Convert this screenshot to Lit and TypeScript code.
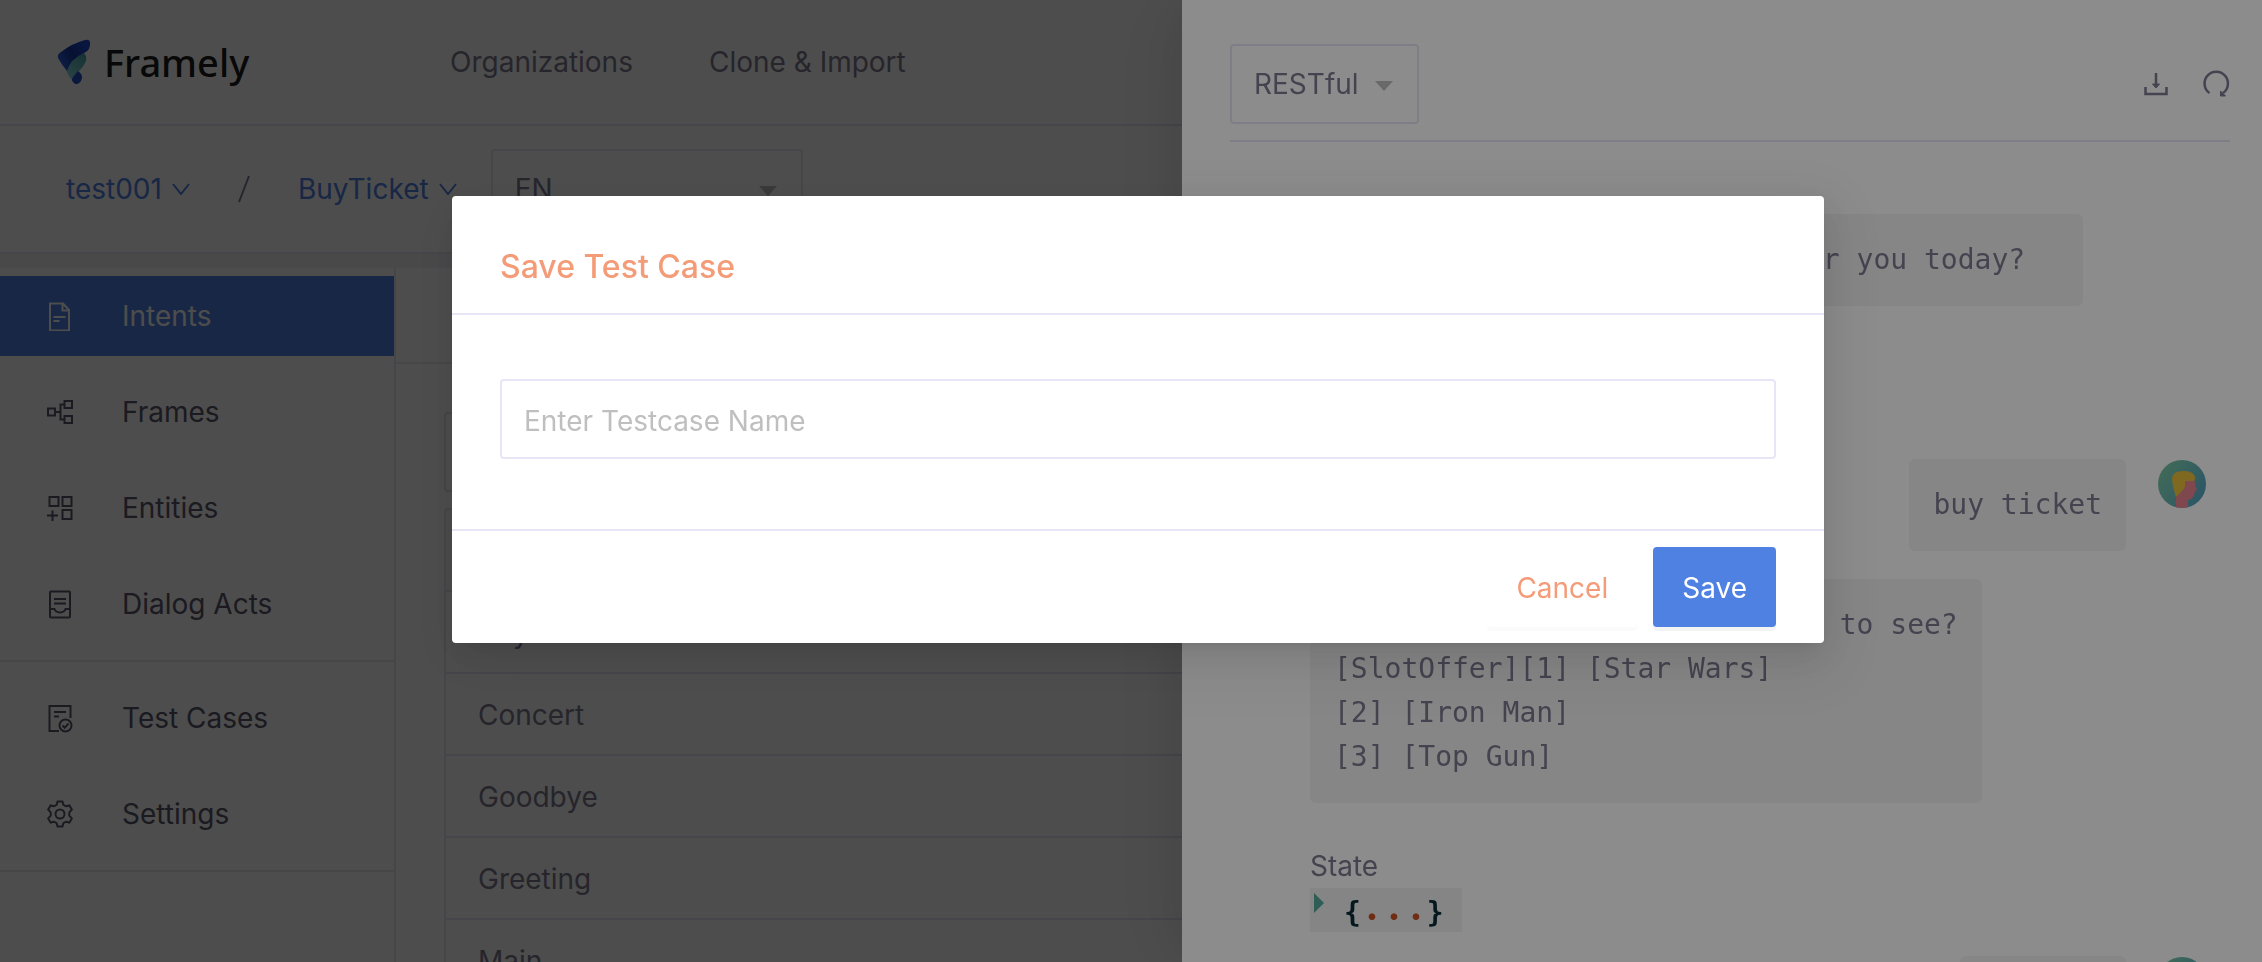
import { LitElement, html, css, svg } from "lit";
import { customElement } from "lit/decorators.js";
import { classMap } from "lit/directives/class-map.js";

const icons: Record<string, unknown> = {
  intents: svg`<path d="M4 2.5h13l6 6.500v20.500h-19zM16.500 2.500v7h6.500" /><path d="M7.500 16h12M7.500 20h6" />`,
  frames: svg`<rect x="2" y="11.500" width="7" height="7" /><rect x="18.500" y="4" width="7.500" height="7" /><rect x="18.500" y="19" width="7.500" height="7" /><path d="M9 15h5M18.500 7.500H14.500v15h4" />`,
  entities: svg`<rect x="3.500" y="4" width="9" height="9" /><rect x="16.500" y="4" width="9" height="9" /><rect x="16.500" y="17" width="9" height="9" /><path d="M1 22.500h11M6.500 17.500v10.500" />`,
  acts: svg`<rect x="4" y="2.500" width="20" height="26" rx="1" /><path d="M8 10h12M8 14.500h12M4 20h4.500c1.500 4.500 9.500 4.500 11 0h4.500" />`,
  tests: svg`<path d="M13 28H3.500V3h21v12" /><path d="M8 9h12M8 13.500h5" /><circle cx="19.500" cy="22.500" r="6" /><path d="M16.500 22.500l2.200 2.300 3.800-4.300" />`,
  settings: svg`<path d="M11.600 2.500h4.800l1 3.400 2.500 1.400 3.500-.8 2.400 4.100-2.500 2.700v3.400l2.500 2.700-2.400 4.100-3.500-.8-2.500 1.400-1 3.400h-4.800l-1-3.400-2.500-1.400-3.500.8-2.400-4.100 2.500-2.700v-3.400l-2.500-2.700 2.400-4.100 3.500.8 2.500-1.400z" /><circle cx="14" cy="15" r="4.500" />`,
};

interface Item { id: string; label: string; }

const groups: Item[][] = [
  [
    { id: "intents", label: "Intents" },
    { id: "frames", label: "Frames" },
    { id: "entities", label: "Entities" },
    { id: "acts", label: "Dialog Acts" },
  ],
  [
    { id: "tests", label: "Test Cases" },
    { id: "settings", label: "Settings" },
  ],
];

const intents = ["BuyTicket", "Concert", "Goodbye", "Greeting", "Main"];

const messages = [
  { from: "bot", text: "Hello there, what can I do for you today?  " },
  { from: "user", text: "buy ticket" },
  { from: "bot", text: "So which movie would you like to see?\n[SlotOffer][1] [Star Wars]\n[2] [Iron Man]\n[3] [Top Gun]" },
  { from: "user", text: "Top Gun" },
];

const chevron = html`<svg class="chevron" viewBox="0 0 18 12" aria-hidden="true"><path d="M1 1l8 10 8-10" /></svg>`;
const caret = html`<svg class="caret" viewBox="0 0 18 10" aria-hidden="true"><path d="M0 0h18l-9 10z" /></svg>`;

@customElement("app-root")
export class AppRoot extends LitElement {
  static styles = css`
    :host {
      display: flex;
      flex-direction: column;
      height: 100vh;
      overflow: hidden;
      background: #fff;
      color: #7e7a90;
      font: 400 28px/44px Inter, "Liberation Sans", sans-serif;
    }
    *, *::before { box-sizing: border-box; }
    a { color: inherit; text-decoration: none; }
    ul { list-style: none; margin: 0; padding: 0; }
    button, input, select { font: inherit; color: inherit; margin: 0; }
    svg { display: block; flex: none; }

    .header {
      flex: none;
      display: flex;
      align-items: center;
      height: 126px;
      padding: 0 56px;
      border-bottom: 2px solid #e6e6f5;
    }
    .brand {
      display: flex;
      align-items: center;
      gap: 12px;
      width: 394px;
      color: #1c1c1e;
      font: 500 38px/50px "Noto Sans", sans-serif;
    }
    .mark { width: 36px; height: 46px; }
    .nav { display: flex; gap: 76px; }

    .toolbar {
      flex: none;
      display: flex;
      align-items: center;
      height: 128px;
      padding-left: 66px;
      border-bottom: 2px solid #e6e6f5;
    }
    .crumb { display: flex; align-items: center; gap: 10px; color: #4f81e3; }
    .chevron { width: 18px; height: 12px; fill: none; stroke: #4f81e3; stroke-width: 2; }
    .slash { width: 20px; height: 28px; margin: 0 44px; stroke: #7e7a90; stroke-width: 2; }
    .picker { display: grid; align-items: center; height: 80px; }
    .picker > * { grid-area: 1 / 1; }
    .picker select {
      appearance: none;
      width: 100%;
      height: 80px;
      padding: 0 22px;
      border: 2px solid #e6e6f5;
      border-radius: 4px;
      background: none;
    }
    .caret { width: 18px; height: 10px; margin: 4px 26px 0 0; justify-self: end; fill: #bfbfbf; }
    .language { width: 312px; margin-left: 34px; }
    .channel { width: 189px; }

    .workspace {
      flex: 1;
      min-height: 0;
      display: flex;
      border-top: 14px solid #f0f0f6;
    }
    .sidebar { flex: none; width: 396px; border-right: 2px solid #e6e6f5; color: #5b576a; }
    .group {
      display: grid;
      gap: 16px;
      padding: 16px 0;
      border-bottom: 2px solid #e8e8ea;
    }
    .group:first-child { padding-top: 8px; }
    .item { display: flex; align-items: center; gap: 48px; height: 80px; padding-left: 46px; }
    .item svg { width: 28px; height: 30px; fill: none; stroke: currentColor; stroke-width: 2; }
    .item.active { background: #4f81e3; color: #fff; }
    .content { flex: 1; }
    .tabs { height: 96px; border-bottom: 2px solid #ebebf0; }
    .lists { display: grid; gap: 16px; padding: 48px; }
    .search { width: 100%; height: 80px; border: 2px solid #e6e6f5; border-radius: 4px; }
    .list { border: 2px solid #e6e6f5; border-radius: 4px; }
    .list-head { height: 80px; background: #f7f7f7; }
    .row { height: 82px; padding: 19px 32px; border-top: 2px solid #e6e6f5; }

    .mask { position: fixed; inset: 0; background: rgba(0, 0, 0, 0.45); display: flex; }
    .drawer {
      width: 1080px;
      margin-left: auto;
      padding: 44px 32px 0 48px;
      overflow: hidden;
      background: #fff;
      box-shadow: -12px 0 32px -16px rgba(0, 0, 0, 0.08), -18px 0 56px rgba(0, 0, 0, 0.05),
        -24px 0 96px 32px rgba(0, 0, 0, 0.03);
    }
    .drawer-bar {
      display: flex;
      align-items: center;
      gap: 32px;
      padding-bottom: 16px;
      border-bottom: 2px solid #e6e6f5;
    }
    .channel { margin-right: auto; }
    .tool { padding: 0; border: 0; background: none; }
    .tool svg { width: 28px; height: 28px; fill: none; stroke: currentColor; stroke-width: 3; }
    .chat { display: flex; flex-direction: column; padding: 72px 24px 0 80px; }
    .bubble {
      padding: 24px;
      border-radius: 6px;
      background: #f5f5f5;
      font-family: "DejaVu Sans Mono", monospace;
      white-space: pre;
    }
    .user { display: flex; justify-content: flex-end; gap: 32px; margin: 24px 0 28px; }
    .bot { display: grid; justify-items: start; }
    .avatar { width: 48px; height: 48px; margin-top: 1px; }
    .state { margin-top: 41px; }
    .code {
      display: flex;
      align-items: flex-start;
      height: 44px;
      padding: 5px 18px 0 4px;
      border: 0;
      background: #f2f2f2;
      color: #0a2d38;
      font: 700 28px/40px "DejaVu Sans Mono", monospace;
    }
    .code svg { width: 10px; height: 20px; margin-right: 20px; fill: #57ab9f; }
    .dot { width: 22px; color: #cb5526; font-family: Lato, sans-serif; font-size: 44px; font-weight: 700; line-height: 20px; text-align: center; }

    .center { align-items: flex-start; justify-content: center; padding: 196px 0 0 14px; }
    .modal {
      width: 1372px;
      border-radius: 4px;
      background: #fff;
      box-shadow: 0 6px 12px -8px rgba(0, 0, 0, 0.12), 0 12px 32px rgba(0, 0, 0, 0.08),
        0 18px 56px 16px rgba(0, 0, 0, 0.05);
    }
    .title {
      margin: 0;
      padding: 48px 48px 24px;
      border-bottom: 2px solid #e8e6f6;
      color: #f49b78;
      font-size: 32px;
      font-weight: 500;
      line-height: 45px;
    }
    .body { padding: 64px 48px 70px; }
    .name {
      display: block;
      width: 100%;
      height: 80px;
      padding: 4px 22px 0;
      border: 2px solid #e8e6f6;
      border-radius: 4px;
      background: #fff;
      outline: 0;
    }
    .name::placeholder { color: #bfbfbf; opacity: 1; }
    .actions {
      display: flex;
      justify-content: flex-end;
      gap: 16px;
      padding: 16px 48px;
      border-top: 2px solid #e8e6f6;
    }
    .btn { height: 80px; padding: 2px 29px 0; border: 0; border-radius: 4px; }
    .cancel { background: #fff; color: #f49b78; box-shadow: 0 4px 0 rgba(0, 0, 0, 0.016); }
    .save { background: #4f81e3; color: #fff; box-shadow: 0 4px 0 rgba(0, 0, 0, 0.045); }
  `;

  private avatar() {
    return html`<svg class="avatar" viewBox="0 0 48 48" role="img" aria-label="User">
      <defs>
        <linearGradient id="sky" x1="0" y1="0.2" x2="1" y2="0.8">
          <stop offset="0" stop-color="#78c2a0" />
          <stop offset="1" stop-color="#4f9dbb" />
        </linearGradient>
        <clipPath id="disc"><circle cx="24" cy="24" r="24" /></clipPath>
      </defs>
      <g clip-path="url(#disc)">
        <rect width="48" height="48" fill="url(#sky)" />
        <path d="M26 21h11v4l2 5-2 1q0 7-7 9v8H18V36l7-6z" fill="#e5848f" />
        <path d="M14 19q0-8 12-8 11 0 11 8 0 2-2 2h-8q1 7-3 10l-6 6-3-10z" fill="#e8bd3b" />
      </g>
    </svg>`;
  }

  private message(m: { from: string; text: string }) {
    if (m.from === "user") {
      return html`<div class="user"><div class="bubble">${m.text}</div>${this.avatar()}</div>`;
    }
    return html`<div class="bot">
      <div class="bubble">${m.text}</div>
      <span class="state">State</span>
      <button class="code" aria-label="Expand state">
        <svg viewBox="0 0 10 20"><path d="M0 0l10 10L0 20z" /></svg><span>{</span><span class="dot">.</span><span class="dot">.</span><span class="dot">.</span><span>}</span>
      </button>
    </div>`;
  }

  render() {
    return html`
      <header class="header">
        <a class="brand" href="#">
          <svg class="mark" viewBox="0 0 36 46" aria-hidden="true">
            <defs>
              <linearGradient id="top" x1="0" y1="0.6" x2="1" y2="0.1">
                <stop offset="0" stop-color="#2c62dc" />
                <stop offset="0.4" stop-color="#1838a8" />
                <stop offset="1" stop-color="#2050d8" />
              </linearGradient>
              <linearGradient id="mid" x1="0.2" y1="1" x2="0.8" y2="0">
                <stop offset="0" stop-color="#8fdcea" />
                <stop offset="1" stop-color="#4ba7a8" />
              </linearGradient>
            </defs>
            <path d="M10 30Q13 19 28 14q3 3 2 8-2 5-6 9-5 4-7 11-5-5-7-12z" fill="url(#mid)" />
            <path d="M2 19q-1-4 3-6Q17 4 29 1q6-1 5 5 0 5-6 8-14 6-17 18Q6 26 2 19z" fill="url(#top)" />
            <path d="M22 32q6 4 3 10-4 6-8 1-2-2 0-5z" fill="#2050c8" />
          </svg>
          Framely
        </a>
        <nav class="nav"><a href="#">Organizations</a><a href="#">Clone &amp; Import</a></nav>
      </header>
      <div class="toolbar">
        <a class="crumb" href="#">test001 ${chevron}</a>
        <svg class="slash" viewBox="0 0 20 28" aria-hidden="true"><path d="M5 27L15 1" /></svg>
        <a class="crumb" href="#">BuyTicket ${chevron}</a>
        <div class="picker language">
          <select aria-label="Language"><option>EN</option></select>${caret}
        </div>
      </div>
      <div class="workspace">
        <nav class="sidebar">
          ${groups.map((group) => html`<div class="group">
            ${group.map((item) => html`<a href="#" class=${classMap({ item: true, active: item.id === "intents" })}>
              <svg viewBox="0 0 28 30" aria-hidden="true">${icons[item.id]}</svg>${item.label}
            </a>`)}
          </div>`)}
        </nav>
        <main class="content">
          <div class="tabs"></div>
          <div class="lists">
            <input class="search" aria-label="Search intents" />
            <div class="list">
              <div class="list-head"></div>
              <ul>${intents.map((name) => html`<li class="row">${name}</li>`)}</ul>
            </div>
          </div>
        </main>
      </div>

      <div class="mask">
        <aside class="drawer">
          <div class="drawer-bar">
            <div class="picker channel">
              <select aria-label="Channel"><option>RESTful</option></select>${caret}
            </div>
            <button class="tool" aria-label="Download">
              <svg viewBox="0 0 28 28"><path d="M3.500 17v7h21v-7" stroke-width="2.500" /><path d="M14 3v12" stroke-width="2.500" /><path d="M10.500 14h7L14 18z" fill="currentColor" stroke-width="1" /></svg>
            </button>
            <button class="tool" aria-label="Restart">
              <svg viewBox="0 0 28 28"><path d="M7.500 23A11.700 11.700 0 1 1 21 23" stroke-width="2.500" /><path d="M18.500 21l5 5h-5z" fill="currentColor" stroke-width="1" /></svg>
            </button>
          </div>
          <div class="chat">${messages.map((m) => this.message(m))}</div>
        </aside>
      </div>

      <div class="mask center">
        <section class="modal" role="dialog" aria-modal="true" aria-labelledby="title">
          <h2 class="title" id="title">Save Test Case</h2>
          <div class="body"><input class="name" aria-label="Testcase name" placeholder="Enter Testcase Name" /></div>
          <div class="actions">
            <button class="btn cancel">Cancel</button>
            <button class="btn save">Save</button>
          </div>
        </section>
      </div>
    `;
  }
}
